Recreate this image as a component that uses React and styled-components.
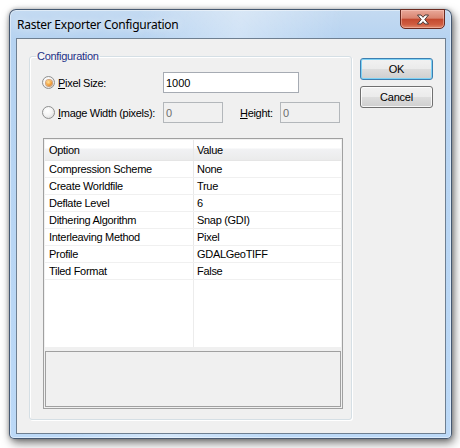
import React from 'react'
import styled, { createGlobalStyle } from 'styled-components'

const GlobalStyle = createGlobalStyle`
  html, body {
    margin: 0;
    background: #ffffff;
  }
  body {
    font-family: "Liberation Sans", Arial, sans-serif;
    font-size: 11px;
    color: #000000;
  }
  * { box-sizing: border-box; }
`

const Page = styled.div`
  width: 460px;
  height: 448px;
  padding: 9px 0 0 9px;
  overflow: hidden;
`

const Window = styled.div`
  width: 443px;
  height: 430px;
  border: 1px solid rgba(30, 45, 70, 0.75);
  border-radius: 7px 7px 5px 5px;
  padding: 0 5px 4px 6px;
  display: flex;
  flex-direction: column;
  background:
    linear-gradient(100deg, rgba(255,255,255,0) 25%, rgba(255,255,255,0.35) 45%, rgba(255,255,255,0) 65%),
    linear-gradient(180deg, #c4daf1 0%, #b6d3f1 30px, #bcd9f7 100%);
  box-shadow: 2px 4px 10px rgba(0, 0, 0, 0.55), 0 0 4px rgba(0, 0, 0, 0.25),
    inset 0 0 0 1px rgba(255, 255, 255, 0.45);
`

const TitleBar = styled.div`
  height: 28px;
  display: flex;
  align-items: center;
  justify-content: space-between;
  padding-left: 1px;
`

const Title = styled.span`
  font-family: "Noto Sans", "Open Sans", sans-serif;
  font-size: 12px;
  letter-spacing: -0.25px;
  color: #000000;
  text-shadow: 0 0 8px rgba(255, 255, 255, 0.9);
`

const CloseButton = styled.div`
  align-self: flex-start;
  margin-top: -1px;
  margin-right: 1px;
  width: 45px;
  height: 20px;
  border: 1px solid #6a2a20;
  border-radius: 0 0 5px 5px;
  background: linear-gradient(180deg, #e9a99a 0%, #d98470 45%, #c44a30 52%, #cf5c40 80%, #e08a6c 100%);
  box-shadow: inset 0 0 0 1px rgba(255, 210, 200, 0.45);
  display: flex;
  align-items: center;
  justify-content: center;
`

const Client = styled.div`
  flex: 1;
  border: 1px solid #6e7f91;
  background: #f0f0f0;
  display: flex;
  align-items: flex-start;
  padding: 11px 0 0 12px;
`

const GroupBox = styled.fieldset`
  width: 323px;
  margin: 0;
  padding: 9px 8px 10px 6px;
  border: 1px solid #d5dfe5;
  border-radius: 3px;
  box-shadow: inset 1px 1px 0 #ffffff, 1px 1px 0 #ffffff;
  min-width: 0;
`

const Legend = styled.legend`
  padding: 0 1px;
  line-height: 13px;
  color: #1e3287;
  letter-spacing: -0.3px;
`

const GroupContent = styled.div`
  padding-left: 6px;
  display: flex;
  flex-direction: column;
`

const OptionRow = styled.div`
  display: flex;
  align-items: center;
  height: 21px;
  margin-top: ${({ $gap }) => $gap || 0}px;
`

const RadioLabel = styled.label`
  width: 121px;
  display: flex;
  align-items: center;
  gap: 3px;
  letter-spacing: -0.3px;
`

const Radio = styled.span`
  width: 13px;
  height: 13px;
  border-radius: 50%;
  border: 1px solid #8e8f8f;
  background: radial-gradient(circle at 40% 35%, #ffffff 0%, #f4f4f4 45%, #d4d4d4 100%);
  display: flex;
  align-items: center;
  justify-content: center;
  flex: none;
  &::after {
    content: '';
    display: ${({ $checked }) => ($checked ? 'block' : 'none')};
    width: 6px;
    height: 6px;
    border-radius: 50%;
    background: radial-gradient(circle at 40% 35%, #ffe4a0 0%, #f2a03a 55%, #c8640f 100%);
    box-shadow: 0 0 0 1px rgba(180, 95, 20, 0.55);
  }
`

const TextBox = styled.div`
  width: ${({ $w }) => $w}px;
  height: 21px;
  border: 1px solid ${({ $disabled }) => ($disabled ? '#b3b7bb' : '#a6abb3')};
  background: ${({ $disabled }) => ($disabled ? '#f0f0f0' : '#ffffff')};
  color: ${({ $disabled }) => ($disabled ? '#6d6d6d' : '#000000')};
  display: flex;
  align-items: center;
  padding-left: 2px;
`

const FieldLabel = styled.label`
  width: 40px;
  margin-left: 17px;
  letter-spacing: -0.3px;
`

const PropertyGrid = styled.div`
  margin: 15px 0 0 1px;
  width: 300px;
  height: 271px;
  border: 1px solid #a0a0a0;
  padding: 1px;
  background: #f0f0f0;
  display: flex;
  flex-direction: column;
  gap: 4px;
`

const Table = styled.div`
  flex: 1;
  background: #ffffff;
  display: flex;
  flex-direction: column;
`

const HeaderRow = styled.div`
  display: flex;
  height: 21px;
  border-bottom: 1px solid #e5e5e5;
  background: linear-gradient(180deg, #ffffff 0%, #ffffff 40%, #f1f2f4 45%, #ebebeb 100%);
`

const Row = styled.div`
  display: flex;
  height: 17px;
  border-bottom: 1px solid #f0f0f0;
`

const Cell = styled.div`
  display: flex;
  align-items: center;
  letter-spacing: -0.3px;
  white-space: nowrap;
  ${({ $first }) =>
    $first
      ? `width: 149px; padding-left: 4px; border-right: 1px solid #e8e8e8;`
      : `flex: 1; padding-left: 3px;`}
`

const Filler = styled.div`
  flex: 1;
  display: flex;
`

const FillerColumn = styled.div`
  width: 149px;
  border-right: 1px solid #ececec;
`

const Description = styled.div`
  height: 56px;
  border: 1px solid #a0a0a0;
  background: #f0f0f0;
`

const ButtonColumn = styled.div`
  margin-left: 8px;
  padding-top: 8px;
  display: flex;
  flex-direction: column;
  gap: 6px;
`

const Button = styled.div`
  width: 73px;
  height: 22px;
  border: 1px solid ${({ $default }) => ($default ? '#3c7fb1' : '#707070')};
  border-radius: 3px;
  background: linear-gradient(180deg, #f2f2f2 0%, #ebebeb 48%, #dddddd 52%, #cfcfcf 100%);
  box-shadow: inset 0 0 0 1px ${({ $default }) => ($default ? '#7fd2f5' : 'rgba(255,255,255,0.8)')};
  display: flex;
  align-items: center;
  justify-content: center;
  letter-spacing: -0.2px;
`

const CloseGlyph = () => (
  <svg width="14" height="11" viewBox="0 0 14 11">
    <path
      d="M1.5 1 H5 L7 3.3 L9 1 H12.5 L8.8 5.5 L12.5 10 H9 L7 7.7 L5 10 H1.5 L5.2 5.5 Z"
      fill="#ffffff"
      stroke="#4a3a38"
      strokeWidth="1"
      strokeLinejoin="round"
    />
  </svg>
)

const properties = [
  ['Compression Scheme', 'None'],
  ['Create Worldfile', 'True'],
  ['Deflate Level', '6'],
  ['Dithering Algorithm', 'Snap (GDI)'],
  ['Interleaving Method', 'Pixel'],
  ['Profile', 'GDALGeoTIFF'],
  ['Tiled Format', 'False'],
]

export default function App() {
  return (
    <Page>
      <GlobalStyle />
      <Window>
        <TitleBar>
          <Title>Raster Exporter Configuration</Title>
          <CloseButton>
            <CloseGlyph />
          </CloseButton>
        </TitleBar>
        <Client>
          <GroupBox>
            <Legend>Configuration</Legend>
            <GroupContent>
              <OptionRow>
                <RadioLabel>
                  <Radio $checked />
                  <span><u>P</u>ixel Size:</span>
                </RadioLabel>
                <TextBox $w={136}>1000</TextBox>
              </OptionRow>
              <OptionRow $gap={9}>
                <RadioLabel>
                  <Radio />
                  <span><u>I</u>mage Width (pixels):</span>
                </RadioLabel>
                <TextBox $w={60} $disabled>0</TextBox>
                <FieldLabel><u>H</u>eight:</FieldLabel>
                <TextBox $w={60} $disabled>0</TextBox>
              </OptionRow>
              <PropertyGrid>
                <Table>
                  <HeaderRow>
                    <Cell $first>Option</Cell>
                    <Cell>Value</Cell>
                  </HeaderRow>
                  {properties.map(([name, value]) => (
                    <Row key={name}>
                      <Cell $first>{name}</Cell>
                      <Cell>{value}</Cell>
                    </Row>
                  ))}
                  <Filler>
                    <FillerColumn />
                  </Filler>
                </Table>
                <Description />
              </PropertyGrid>
            </GroupContent>
          </GroupBox>
          <ButtonColumn>
            <Button $default>OK</Button>
            <Button>Cancel</Button>
          </ButtonColumn>
        </Client>
      </Window>
    </Page>
  )
}
